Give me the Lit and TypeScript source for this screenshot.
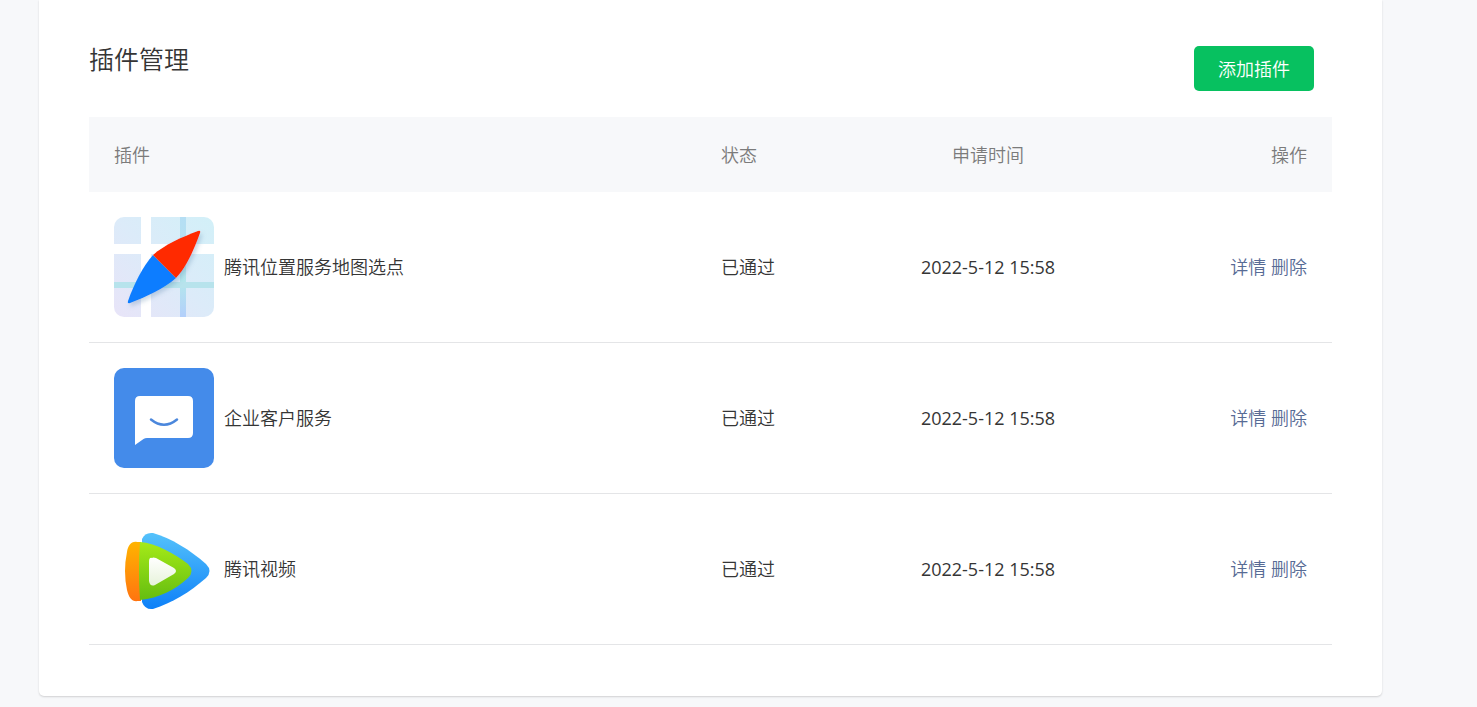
import { LitElement, html, css } from "lit";
import { customElement } from "lit/decorators.js";

const mapIcon = html`<svg class="icon" viewBox="0 0 100 100" aria-hidden="true">
  <defs>
    <linearGradient id="map-bg" x1="0" y1="1" x2="1" y2="0">
      <stop offset="0" stop-color="#e8e4f8" />
      <stop offset=".5" stop-color="#dcebf9" />
      <stop offset="1" stop-color="#d2f0f8" />
    </linearGradient>
    <linearGradient id="map-v" x1="0" y1="0" x2="0" y2="1">
      <stop offset="0" stop-color="#b5def4" />
      <stop offset=".65" stop-color="#b4e6ec" />
      <stop offset="1" stop-color="#b3cffb" />
    </linearGradient>
    <clipPath id="map-clip"><rect width="100" height="100" rx="10" /></clipPath>
    <filter id="map-shadow" x="-20%" y="-20%" width="140%" height="140%">
      <feDropShadow dx="2" dy="3" stdDeviation="2" flood-color="#5580a8" flood-opacity=".3" />
    </filter>
  </defs>
  <g clip-path="url(#map-clip)">
    <rect width="100" height="100" fill="url(#map-bg)" />
    <path d="M66 0h6v100h-6z" fill="url(#map-v)" />
    <path d="M0 65h100v6H0z" fill="#b7e3ec" />
    <path d="M27 0h10v100H27zM0 27h100v10H0z" fill="#fff" />
  </g>
  <g filter="url(#map-shadow)">
    <path d="M39 38 62 61C51 71 32 80 16 86Q13 87 14 84C20 67 29 49 39 38Z" fill="#0d7dff" />
    <path d="M39 38C50 28 68 20 84 14Q87 13 86 16C80 33 72 51 62 61Z" fill="#ff2b00" />
  </g>
</svg>`;

const chatIcon = html`<svg class="icon" viewBox="0 0 100 100" aria-hidden="true">
  <rect width="100" height="100" rx="10" fill="#448bea" />
  <path d="M26 28h48q5 0 5 5v32q0 5-5 5H33q-2 0-3.500 1L21 77V33q0-5 5-5Z" fill="#fff" />
  <path d="M37 51.500Q50 62 63 51.500" fill="none" stroke="#4b87dc" stroke-width="2.500" stroke-linecap="round" />
</svg>`;

const videoIcon = html`<svg class="icon" viewBox="0 -1 100 100" aria-hidden="true">
  <defs>
    <linearGradient id="video-blue" x1="0" y1="0" x2="0" y2="1">
      <stop offset="0" stop-color="#55c2fb" />
      <stop offset="1" stop-color="#0d80f8" />
    </linearGradient>
    <linearGradient id="video-orange" x1="0" y1="0" x2="0" y2="1">
      <stop offset="0" stop-color="#ffb400" />
      <stop offset="1" stop-color="#ff7410" />
    </linearGradient>
    <linearGradient id="video-green" x1="0" y1="0" x2="0" y2="1">
      <stop offset="0" stop-color="#a5ea18" />
      <stop offset="1" stop-color="#65bd10" />
    </linearGradient>
    <linearGradient id="video-play" x1="0" y1="0" x2="0" y2="1">
      <stop offset="0" stop-color="#fff" />
      <stop offset="1" stop-color="#e7f3da" />
    </linearGradient>
  </defs>
  <path d="M28 19Q31 12 39 13C57 18 76 30 92 44Q99 51 92 58C76 72 58 83 39 89Q31 90 28 82Z" fill="url(#video-blue)" />
  <path d="M27 22H23C17 21 14 26 13 32Q9 51 13 70C15 78 18 82 24 81H27L32 51Z" fill="url(#video-orange)" />
  <path d="M26 22C42 23 61 34 74 44Q81 51 74 58C61 70 45 78 26 80Q24 51 26 22Z" fill="url(#video-green)" />
  <path d="M38 38Q39 37 42 38L60 48Q64 51 60 54L41 65Q36 67 35 61V42Q35 37 38 38Z" fill="url(#video-play)" />
</svg>`;

const plugins = [
  { name: "腾讯位置服务地图选点", icon: mapIcon },
  { name: "企业客户服务", icon: chatIcon },
  { name: "腾讯视频", icon: videoIcon },
].map((p) => ({ ...p, status: "已通过", time: "2022-5-12 15:58" }));

@customElement("app-root")
export class AppRoot extends LitElement {
  static styles = css`
    :host {
      display: block;
      box-sizing: border-box;
      min-height: 100vh;
      padding: 0 95px 11px 39px;
      background: #f7f8fa;
      color: #353535;
      font: 350 18px/26px "Open Sans", "Noto Sans CJK SC", sans-serif;
    }
    .card {
      padding: 42px 50px 51px;
      background: #fff;
      border-radius: 0 0 5px 5px;
      box-shadow: 0 1px 2px rgba(0, 0, 0, 0.16);
    }
    .head {
      display: flex;
      justify-content: space-between;
      align-items: flex-start;
      padding-right: 18px;
      margin-bottom: 26px;
    }
    .title {
      margin: 0;
      font-size: 25px;
      line-height: 34px;
      font-weight: 350;
    }
    .add {
      margin-top: 4px;
      padding: 0 24px;
      height: 45px;
      border: 0;
      border-radius: 5px;
      background: #07c160;
      color: #fff;
      font: inherit;
      cursor: pointer;
    }
    .table {
      width: 100%;
      table-layout: fixed;
      border-collapse: separate;
      border-spacing: 0;
    }
    .col-status { width: 174px; }
    .col-time { width: 236px; }
    .col-ops { width: 226px; }
    .th {
      height: 75px;
      padding: 0 25px;
      background: #f7f8fa;
      color: #7b7b7b;
      font-weight: 350;
      text-align: left;
    }
    .td {
      padding: 25px;
      border-bottom: 1px solid #e4e5e7;
    }
    .center { text-align: center; }
    .time {
      padding-left: 0;
      padding-right: 0;
      font-weight: 400;
    }
    .right { text-align: right; }
    .plugin {
      display: flex;
      align-items: center;
      gap: 10px;
    }
    .icon {
      display: block;
      flex: none;
      width: 100px;
      height: 100px;
    }
    .link {
      color: #576b95;
      text-decoration: none;
    }
  `;

  render() {
    return html`<main class="card">
      <header class="head">
        <h1 class="title">插件管理</h1>
        <button class="add" type="button">添加插件</button>
      </header>
      <table class="table">
        <colgroup>
          <col />
          <col class="col-status" />
          <col class="col-time" />
          <col class="col-ops" />
        </colgroup>
        <thead>
          <tr>
            <th class="th" scope="col">插件</th>
            <th class="th" scope="col">状态</th>
            <th class="th center" scope="col">申请时间</th>
            <th class="th right" scope="col">操作</th>
          </tr>
        </thead>
        <tbody>
          ${plugins.map(
            (p) => html`<tr>
              <td class="td"><div class="plugin">${p.icon}<span>${p.name}</span></div></td>
              <td class="td">${p.status}</td>
              <td class="td time center">${p.time}</td>
              <td class="td right">
                <a class="link" href="#">详情</a>
                <a class="link" href="#">删除</a>
              </td>
            </tr>`
          )}
        </tbody>
      </table>
    </main>`;
  }
}
